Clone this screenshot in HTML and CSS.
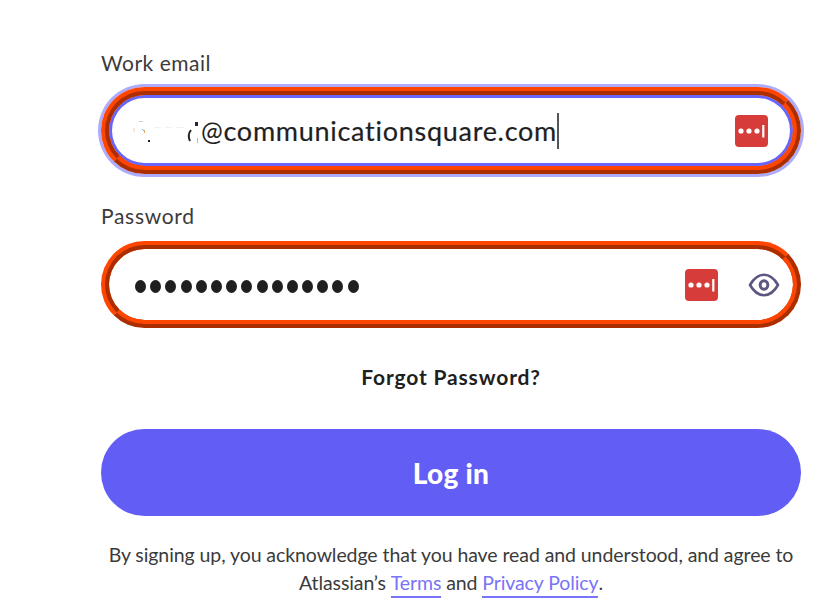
FILE: index.html
```html
<!DOCTYPE html>
<html lang="en">
<head>
    <meta charset="UTF-8">
    <meta name="viewport" content="width=device-width, initial-scale=1.0">
    <title>Log in</title>
    <link rel="stylesheet" href="styles.css">
</head>
<body>
    <form class="login-form">
        <div class="label"><span class="label-email">Work email</span></div>
        <div class="field focused">
            <svg class="hidden-name" width="68" height="30" viewBox="0 0 68 30">
                <path d="M15 5.500h4" stroke="#ccc" stroke-width="1"/>
                <path d="M10 12v4" stroke="#f3c9c9" stroke-width="1"/>
                <path d="M18 13l2 2" stroke="#8ad" stroke-width="1"/>
                <path d="M20.500 14v3" stroke="#e0a868" stroke-width="1"/>
                <path d="M24 24h2v2h-2z" fill="#222"/>
                <path d="M30 11.500h7M41 11.500h7M52 11.500h8" stroke="#f1f1f1" stroke-width="1"/>
                <path d="M67 14q-4 5 -1 11" fill="none" stroke="#222" stroke-width="2"/>
            </svg>
            <svg class="letter-rest" width="7" height="30" viewBox="0 0 7 30">
                <path d="M3 6h3v4h-3z" fill="#252535"/>
                <path d="M5.500 22v5" stroke="#8ac4e8" stroke-width="1"/>
            </svg>
            <span class="email"><span class="at">@</span>communicationsquare.com</span>
            <span class="caret"></span>
            <svg class="manager" width="33" height="32" viewBox="0 0 33 32">
                <rect width="33" height="32" rx="4" fill="#d63d3a"/>
                <g fill="#fff"><circle cx="6" cy="16" r="2.600"/><circle cx="14" cy="16" r="2.600"/><circle cx="22" cy="16" r="2.600"/><rect x="27.200" y="10" width="2.200" height="12.500"/></g>
            </svg>
        </div>
        <div class="label label-second"><span class="label-password">Password</span></div>
        <div class="field">
            <div class="dots">
                <i></i><i></i><i></i><i></i><i></i><i></i><i></i><i></i><i></i><i></i><i></i><i></i><i></i><i></i><i></i>
            </div>
            <svg class="manager" width="33" height="32" viewBox="0 0 33 32">
                <rect width="33" height="32" rx="4" fill="#d63d3a"/>
                <g fill="#fff"><circle cx="6" cy="16" r="2.600"/><circle cx="14" cy="16" r="2.600"/><circle cx="22" cy="16" r="2.600"/><rect x="27.200" y="10" width="2.200" height="12.500"/></g>
            </svg>
            <svg class="eye" width="32" height="24" viewBox="0 0 32 24" fill="none" stroke="#5c5680" stroke-width="2.600">
                <path d="M2 12C6 5 10.500 1.800 16 1.800S26 5 30 12C26 19 21.500 22.200 16 22.200S6 19 2 12z" stroke-linejoin="round"/>
                <ellipse cx="16" cy="12" rx="3.800" ry="4.300" stroke-width="3"/>
            </svg>
        </div>
        <a class="forgot">Forgot Password?</a>
        <button type="button" class="login-button">Log in</button>
        <div class="terms">
            <div class="line-one">By signing up, you acknowledge that you have read and understood, and agree to</div>
            <div class="line-two">Atlassian’s <a>Terms</a> and <a>Privacy Policy</a>.</div>
        </div>
    </form>
</body>
</html>
```
FILE: styles.css
```css
* {
    box-sizing: border-box;
}
body {
    margin: 0;
    height: 598px;
    overflow: hidden;
    background: #fff;
    color: #3b3b3b;
    font-family: Lato, "Liberation Sans", sans-serif;
}
.login-form {
    width: 700px;
    margin-left: 101px;
    padding-top: 48px;
    white-space: nowrap;
}
.label {
    height: 30px;
    margin-bottom: 9px;
    font-size: 21px;
    line-height: 30px;
}
.label-second {
    margin-bottom: 10px;
}
.label-email {
    letter-spacing: 0.5px;
}
.label-password {
    letter-spacing: 0.7px;
}
.field {
    display: flex;
    align-items: center;
    height: 87px;
    margin-bottom: 27px;
    padding: 0 13px 0 26px;
    border: 8px ridge #ff4500;
    border-radius: 44px;
}
.focused {
    padding: 0 25px 0 15px;
    box-shadow: 0 0 0 3px #adabfc, inset 0 0 0 3px #6964fa;
}
.letter-rest {
    margin-right: 2px;
}
.email {
    color: #1f1f1f;
    font-size: 27px;
    letter-spacing: 0.72px;
    -webkit-text-stroke: 0.2px #1f1f1f;
}
.at {
    font-size: 26px;
    -webkit-text-stroke: 0;
}
.caret {
    width: 2px;
    height: 36px;
    background: #555;
}
.manager {
    margin-left: auto;
}
.dots {
    display: flex;
    gap: 4.2px;
    margin-top: 4px;
}
.dots i {
    width: 11px;
    height: 13px;
    border-radius: 50%;
    background: #1f1f1f;
}
.eye {
    margin-left: 30px;
}
.forgot {
    display: block;
    margin-top: 33px;
    text-align: center;
    color: #1f1f1f;
    font-size: 21px;
    font-weight: bold;
    line-height: 32px;
    letter-spacing: 0.85px;
}
.login-button {
    display: block;
    width: 700px;
    height: 87px;
    margin-top: 36px;
    padding: 0;
    border: none;
    border-radius: 44px;
    background: #625df5;
    color: #fff;
    font-family: inherit;
    font-size: 28px;
    font-weight: 900;
    letter-spacing: 0.3px;
}
.terms {
    margin-top: 25px;
    text-align: center;
    font-size: 19.5px;
    line-height: 28px;
}
.line-one {
    letter-spacing: -0.08px;
}
.line-two {
    letter-spacing: -0.1px;
}
.terms a {
    display: inline-block;
    height: 29px;
    vertical-align: top;
    border-bottom: 2px solid #7973f7;
    color: #7973f7;
}
```
